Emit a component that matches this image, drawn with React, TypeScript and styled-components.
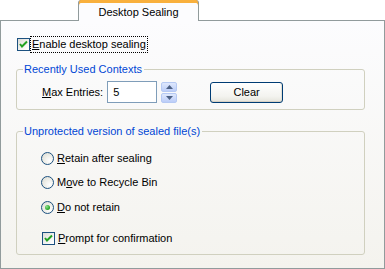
import React from 'react'
import styled, { createGlobalStyle } from 'styled-components'

const GlobalStyle = createGlobalStyle`
  html, body {
    margin: 0;
    padding: 0;
    background: #ffffff;
  }
  body {
    font-family: "Liberation Sans", Arial, sans-serif;
    font-size: 11px;
    color: #000;
  }
`

const Window = styled.div`
  width: 385px;
  height: 269px;
  display: flex;
  flex-direction: column;
  background: #ffffff;
`

const TabStrip = styled.div`
  display: flex;
  padding-left: 78px;
  height: 20px;
  position: relative;
  z-index: 1;
`

const Tab = styled.div`
  width: 119px;
  height: 19px;
  border: 1px solid #919b9c;
  border-top: none;
  border-bottom: none;
  border-radius: 3px 3px 0 0;
  background: #fcfcfe;
  box-shadow: inset 0 3px 0 #f9b03d, inset 0 2px 0 #e68b2c;
  display: flex;
  align-items: center;
  justify-content: center;
  padding-top: 2px;
  margin-bottom: -1px;
`

const Panel = styled.div`
  height: 245px;
  width: 368px;
  border: 1px solid #919b9c;
  box-shadow: 1px 1px 0 #d0d0bf;
  background: linear-gradient(to bottom, #fcfcfe 0%, #f4f3ee 100%);
  display: flex;
  flex-direction: column;
  padding: 14px 0 0 15px;
  box-sizing: content-box;
`

const Row = styled.div<{ $indent?: number; $gap?: number }>`
  display: flex;
  align-items: center;
  margin-left: ${(p) => p.$indent ?? 0}px;
  margin-top: ${(p) => p.$gap ?? 0}px;
  height: 17px;
`

const Label = styled.span<{ $focus?: boolean }>`
  margin-left: ${(p) => (p.$focus ? 0 : 1)}px;
  padding: 1px 1px;
  line-height: 13px;
  border: 1px dotted ${(p) => (p.$focus ? '#000' : 'transparent')};
  white-space: nowrap;
`

const Box = styled.span`
  width: 11px;
  height: 11px;
  border: 1px solid #1c5180;
  background: linear-gradient(135deg, #dcdcd7 0%, #ffffff 90%);
  display: flex;
  align-items: center;
  justify-content: center;
  flex-shrink: 0;
`

const Circle = styled.span`
  width: 11px;
  height: 11px;
  border: 1px solid #1c5180;
  border-radius: 50%;
  background: radial-gradient(circle at 70% 70%, #ffffff 0%, #e9e9e2 60%, #d6d6ce 100%);
  display: flex;
  align-items: center;
  justify-content: center;
  flex-shrink: 0;
`

const Dot = styled.span`
  width: 5px;
  height: 5px;
  border-radius: 50%;
  background: radial-gradient(circle at 35% 35%, #8ee08e 0%, #21a121 70%);
`

const Group = styled.fieldset<{ $height: number; $top: number }>`
  margin: ${(p) => p.$top}px 0 0 0;
  padding: 0;
  width: 349px;
  height: ${(p) => p.$height}px;
  border: 1px solid #d0d0bf;
  border-radius: 3px;
  box-sizing: border-box;
  display: flex;
  flex-direction: column;
`

const Legend = styled.legend`
  color: #0046d5;
  padding: 0 2px 0 1px;
  margin-left: 6px;
  line-height: 13px;
`

const EntryRow = styled.div`
  display: flex;
  align-items: center;
  padding: 5px 0 0 25px;
`

const Input = styled.div`
  width: 43px;
  height: 20px;
  border: 1px solid #7f9db9;
  background: #fff;
  margin-left: 4px;
  display: flex;
  align-items: center;
  padding-left: 5px;
`

const Spin = styled.div`
  display: flex;
  flex-direction: column;
  gap: 1px;
  margin-left: 4px;
`

const SpinButton = styled.div`
  width: 16px;
  height: 10px;
  border: 1px solid #b6c9f3;
  border-radius: 2px;
  box-sizing: border-box;
  background: linear-gradient(to bottom, #dfe8fd 0%, #bccdf8 100%);
  display: flex;
  align-items: center;
  justify-content: center;
`

const Button = styled.button`
  margin-left: 33px;
  width: 73px;
  height: 21px;
  border: 1px solid #003c74;
  border-radius: 3px;
  background: linear-gradient(to bottom, #ffffff 0%, #f3f3ef 70%, #e5e4dc 100%);
  box-shadow: inset 0 -1px 0 #d6d0c5, inset -1px 0 0 #e3e0d5;
  font-family: inherit;
  font-size: 11px;
  color: #000;
  padding: 0;
`

const Options = styled.div`
  display: flex;
  flex-direction: column;
  padding: 12px 0 0 24px;
`

const Check = () => (
  <Box>
    <svg width="9" height="9" viewBox="0 0 9 9">
      <path d="M1 4 L3 6.5 L8 1.5" fill="none" stroke="#21a121" strokeWidth="2" />
    </svg>
  </Box>
)

const Radio = ({ checked }: { checked?: boolean }) => <Circle>{checked && <Dot />}</Circle>

const Arrow = ({ up }: { up?: boolean }) => (
  <svg width="7" height="4" viewBox="0 0 7 4">
    <path d={up ? 'M0 4 L3.5 0 L7 4 Z' : 'M0 0 L3.5 4 L7 0 Z'} fill="#4d6185" />
  </svg>
)

export default function App() {
  return (
    <Window>
      <GlobalStyle />
      <TabStrip>
        <Tab>Desktop Sealing</Tab>
      </TabStrip>
      <Panel>
        <Row $indent={1} $gap={1}>
          <Check />
          <Label $focus>
            <u>E</u>nable desktop sealing
          </Label>
        </Row>
        <Group $height={47} $top={10}>
          <Legend>Recently Used Contexts</Legend>
          <EntryRow>
            <span>
              <u>M</u>ax Entries:
            </span>
            <Input>5</Input>
            <Spin>
              <SpinButton>
                <Arrow up />
              </SpinButton>
              <SpinButton>
                <Arrow />
              </SpinButton>
            </Spin>
            <Button>Clear</Button>
          </EntryRow>
        </Group>
        <Group $height={130} $top={15}>
          <Legend>Unprotected version of sealed file(s)</Legend>
          <Options>
            <Row>
              <Radio />
              <Label>
                <u>R</u>etain after sealing
              </Label>
            </Row>
            <Row $gap={7}>
              <Radio />
              <Label>
                M<u>o</u>ve to Recycle Bin
              </Label>
            </Row>
            <Row $gap={8}>
              <Radio checked />
              <Label>
                <u>D</u>o not retain
              </Label>
            </Row>
            <Row $gap={14} $indent={1}>
              <Check />
              <Label>
                <u>P</u>rompt for confirmation
              </Label>
            </Row>
          </Options>
        </Group>
      </Panel>
    </Window>
  )
}
